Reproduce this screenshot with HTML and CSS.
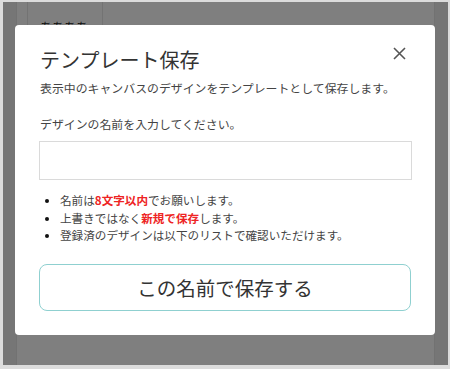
FILE: index.html
```html
<!DOCTYPE html>
<html lang="ja">
  <head>
    <meta charset="UTF-8" />
    <meta name="viewport" content="width=device-width, initial-scale=1.0" />
    <title>テンプレート保存</title>
    <link rel="stylesheet" href="styles.css">
  </head>
  <body>
    <div class="app">
      <aside class="side"></aside>
      <main class="content">
        <div class="tile">ああああ</div>
      </main>
      <aside class="side right"></aside>

      <div class="overlay">
        <section class="modal">
          <header>
            <h2>テンプレート保存</h2>
            <button class="close" aria-label="閉じる">
              <svg width="13" height="13" viewBox="0 0 13 13">
                <path d="M1 1 L12 12 M12 1 L1 12" stroke="#555" stroke-width="1.6" fill="none" />
              </svg>
            </button>
          </header>
          <p class="desc">表示中のキャンバスのデザインをテンプレートとして保存します。</p>
          <label for="name">デザインの名前を入力してください。</label>
          <input id="name" type="text" />
          <ul class="notes">
            <li>名前は<strong>8文字以内</strong>でお願いします。</li>
            <li>上書きではなく<strong>新規で保存</strong>します。</li>
            <li>登録済のデザインは以下のリストで確認いただけます。</li>
          </ul>
          <button class="save">この名前で保存する</button>
        </section>
      </div>
    </div>
  </body>
</html>
```

FILE: styles.css
```css
*,
*::before,
*::after {
  box-sizing: border-box;
  margin: 0;
  padding: 0;
}
html {
  font-family: "Noto Sans CJK JP", "Noto Sans", sans-serif;
  color: #333;
}
body {
  background-color: #dcdcdc;
  padding: 2px 2px 4px 3px;
  height: 100vh;
}
.app {
  position: relative;
  display: flex;
  height: 100%;
  background-color: #fff;
}
.side {
  width: 14px;
  background-color: #ececec;
  border-right: 1px solid #e4e4e4;
  &.right {
    border-right: none;
    border-left: 1px solid #e4e4e4;
  }
}
.content {
  flex-grow: 1;
  padding: 0 10px;
}
.tile {
  width: 76px;
  height: 40px;
  border: 1px solid #e6e6e6;
  border-top: none;
  padding: 18px 0 0 12px;
  font-size: 12px;
  line-height: 14px;
  color: #222;
}

/* capa oscura encima de la pagina */
.overlay {
  position: absolute;
  inset: 0;
  background-color: rgba(0, 0, 0, 0.5);
}
.modal {
  position: absolute;
  left: 12px;
  top: 23px;
  width: 420px;
  height: 310px;
  background-color: #fff;
  border-radius: 4px;
  padding: 21px 24px 24px;
  display: flex;
  flex-direction: column;

  & header {
    display: flex;
    justify-content: space-between;
    align-items: flex-start;
  }
  & h2 {
    font-size: 20px;
    font-weight: 400;
    line-height: 28px;
    padding-left: 1px;
    color: #333;
  }
  & .close {
    width: 24px;
    height: 24px;
    margin-top: -5px;
    border: none;
    background: none;
    display: grid;
    place-content: center;
    cursor: pointer;
  }
}
.desc,
label {
  font-size: 11.9px;
  line-height: 18px;
  color: #444;
  padding-left: 1px;
}
.desc {
  margin-top: 5px;
}
label {
  margin-top: 18px;
}
input {
  margin-top: 8px;
  height: 39px;
  width: 373px;
  border: 1px solid #dadada;
  outline: none;
  font: inherit;
}
.notes {
  margin-top: 12px;
  padding-left: 21px;
  font-size: 11.6px;
  line-height: 17.5px;
  color: #444;
  & li::marker {
    color: #111;
  }
  & strong {
    color: #ee2424;
    font-weight: 700;
  }
}
.save {
  margin-top: 19px;
  height: 47px;
  width: 372px;
  border: 1px solid #8fd0d0;
  border-radius: 8px;
  background-color: #fff;
  font-family: inherit;
  font-size: 19.5px;
  color: #333;
  cursor: pointer;
}
```
